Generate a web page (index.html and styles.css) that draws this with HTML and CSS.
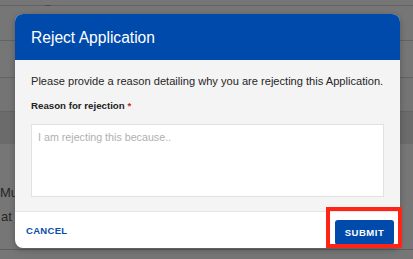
FILE: index.html
```html
<!DOCTYPE html>
<html>
<head>
<meta charset="utf-8">
<link rel="stylesheet" href="styles.css">
</head>
<body>
<div class="page">
  <div class="row row-a"><span class="avatar"></span></div>
  <div class="row row-b"></div>
  <div class="row row-c"></div>
  <div class="row row-d"></div>
  <div class="row row-e">
    <div class="bgtext">Mu</div>
    <div class="bgtext at">at</div>
  </div>
</div>

<div class="dialog">
  <div class="dialog-header">Reject Application</div>
  <div class="dialog-body">
    <p class="intro">Please provide a reason detailing why you are rejecting this Application.</p>
    <label class="label">Reason for rejection <span class="req">*</span></label>
    <div class="textarea">I am rejecting this because..</div>
  </div>
  <div class="dialog-footer">
    <span class="cancel">CANCEL</span>
    <span class="submit">SUBMIT</span>
  </div>
</div>
<div class="highlight"></div>
</body>
</html>
```
FILE: styles.css
```css
* { box-sizing: border-box; }
html, body { margin: 0; padding: 0; }
body {
  width: 413px;
  height: 259px;
  overflow: hidden;
  background: #757575;
  font-family: "Liberation Sans", Arial, sans-serif;
  position: relative;
}
.page { display: flex; flex-direction: column; }
.row { border-bottom: 1px solid #636363; position: relative; }
.row-a { height: 6px; background: #767676; }
.row-b { height: 35px; background: #767676; }
.row-c { height: 37px; background: #767676; }
.row-d { height: 34px; background: #747474; }
.row-e {
  height: 146px;
  border-bottom: none;
  background: linear-gradient(#6b6b6b 0 32px, #767676 32px);
}
.row-e::after {
  content: ""; position: absolute; left: 0; right: 0; top: 137px;
  height: 1px; background: #5e5e5e;
}
.avatar {
  position: absolute; left: 37px; top: 5px;
  width: 22px; height: 22px; border-radius: 50%;
  border: 1px solid #4a4540;
}
.bgtext {
  position: absolute;
  font-size: 13px; color: #262626;
  left: 0; top: 73px;
}
.bgtext.at { top: 97px; left: 1px; }

.dialog {
  position: absolute;
  left: 15px; top: 14px;
  width: 385px;
  border-radius: 8px;
  overflow: hidden;
  background: #fff;
  box-shadow: 0 2px 6px rgba(0,0,0,0.25);
  display: flex; flex-direction: column;
}
.dialog-header {
  background: #004aac;
  color: #fff;
  height: 46px;
  display: flex; align-items: center;
  padding: 2px 16px 0;
  font-size: 15.6px;
}
.dialog-body {
  background: #f4f4f4;
  padding: 14px 16px 14px;
}
.intro { margin: 0; font-size: 11.1px; color: #262626; line-height: 14px; }
.label { display: block; margin-top: 12px; font-size: 9.7px; font-weight: bold; color: #222; line-height: 12px; }
.req { color: #c62828; }
.textarea {
  margin-top: 12px;
  height: 73px;
  background: #fff;
  border: 1px solid #e2e2e2;
  padding: 6px 6px;
  font-size: 10.7px;
  color: #b0b0b0;
}
.dialog-footer {
  height: 37px;
  border-top: 1px solid #e6e6e6;
  display: flex; align-items: center; justify-content: space-between;
  padding: 0 6px 0 11px;
}
.cancel { font-size: 9.5px; font-weight: bold; color: #0a4cab; letter-spacing: 0.3px; }
.submit {
  background: #004aac; color: #fff;
  width: 59px; height: 25px;
  border-radius: 3px;
  display: flex; align-items: center; justify-content: center;
  font-size: 9.5px; font-weight: bold; letter-spacing: 0.5px;
  margin-top: 5px;
}
.highlight {
  position: absolute;
  left: 326px; top: 207px;
  width: 76px; height: 41px;
  border: 4px solid #ff2416;
}
```
